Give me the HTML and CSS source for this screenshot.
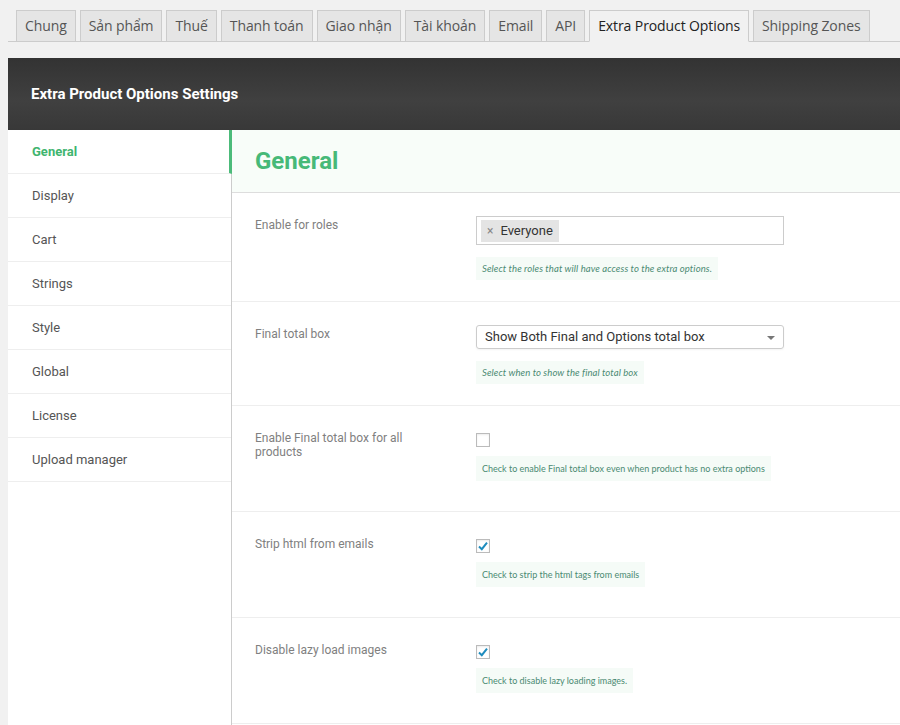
FILE: index.html
```html
<!DOCTYPE html>
<html lang="vi">
<head>
  <meta charset="UTF-8" />
  <title>Extra Product Options Settings</title>
  <link rel="stylesheet" href="styles.css">
</head>
<body>

<div class="wrap">
  <nav class="tabs">
    <a class="tab">Chung</a>
    <a class="tab">Sản phẩm</a>
    <a class="tab">Thuế</a>
    <a class="tab">Thanh toán</a>
    <a class="tab">Giao nhận</a>
    <a class="tab">Tài khoản</a>
    <a class="tab">Email</a>
    <a class="tab">API</a>
    <a class="tab active">Extra Product Options</a>
    <a class="tab">Shipping Zones</a>
  </nav>

  <div class="settings-head">
    <h1>Extra Product Options Settings</h1>
  </div>

  <div class="settings">
    <ul class="side">
      <li class="active">General</li>
      <li>Display</li>
      <li>Cart</li>
      <li>Strings</li>
      <li>Style</li>
      <li>Global</li>
      <li>License</li>
      <li>Upload manager</li>
    </ul>

    <div class="content">
      <div class="content-head"><h2>General</h2></div>

      <div class="row">
        <div class="label">Enable for roles</div>
        <div class="field">
          <div class="multi">
            <span class="choice"><span class="x">×</span>Everyone</span>
          </div>
          <div class="help italic">Select the roles that will have access to the extra options.</div>
        </div>
      </div>

      <div class="row">
        <div class="label">Final total box</div>
        <div class="field">
          <div class="select">Show Both Final and Options total box<span class="arrow"></span></div>
          <div class="help italic">Select when to show the final total box</div>
        </div>
      </div>

      <div class="row check">
        <div class="label">Enable Final total box for all products</div>
        <div class="field">
          <span class="box"></span>
          <div class="help">Check to enable Final total box even when product has no extra options</div>
        </div>
      </div>

      <div class="row check">
        <div class="label">Strip html from emails</div>
        <div class="field">
          <span class="box checked"><svg viewBox="0 0 14 14" width="14" height="14"><path d="M3 7.5 L5.8 10.2 L11 3.6" fill="none" stroke="#1e8cbe" stroke-width="2"/></svg></span>
          <div class="help">Check to strip the html tags from emails</div>
        </div>
      </div>

      <div class="row check">
        <div class="label">Disable lazy load images</div>
        <div class="field">
          <span class="box checked"><svg viewBox="0 0 14 14" width="14" height="14"><path d="M3 7.5 L5.8 10.2 L11 3.6" fill="none" stroke="#1e8cbe" stroke-width="2"/></svg></span>
          <div class="help">Check to disable lazy loading images.</div>
        </div>
      </div>
    </div>
  </div>
</div>

</body>
</html>
```

FILE: styles.css
```css
body {
  margin: 0;
  background: #f1f1f1;
  font-family: Roboto, "Open Sans", sans-serif;
  color: #555;
}
.wrap { margin-left: 8px; }

.tabs { display: flex; gap: 4px; padding: 10px 0 0 8px; border-bottom: 1px solid #ccc; }
.tab {
  font-family: "Open Sans", sans-serif;
  font-size: 14px;
  line-height: 22px;
  padding: 4px 8px;
  margin-bottom: -1px;
  background: #e5e5e5;
  border: 1px solid #ccc;
  color: #555;
  letter-spacing: -0.1px;
}
.tab.active { background: #f1f1f1; border-bottom-color: #f1f1f1; color: #222; }

.settings-head {
  margin-top: 16px;
  height: 72px;
  display: flex;
  align-items: center;
  padding-left: 23px;
  background: linear-gradient(to bottom, #333, #404040 60%, #383838);
}
.settings-head h1 { margin: 0; color: #fff; font-size: 15px; font-weight: 700; }

.settings { display: flex; background: #fff; min-height: 600px; }
.side { list-style: none; margin: 0; padding: 0; width: 223px; border-right: 1px solid #ccc; }
.side li {
  height: 43px;
  line-height: 43px;
  padding-left: 24px;
  border-bottom: 1px solid #eee;
  font-size: 13px;
  color: #555;
}
.side li.active { color: #3fb56f; font-weight: 700; border-right: 3px solid #4cbb7a; margin-right: -1px; }

.content { flex: 1; }
.content-head {
  height: 62px;
  border-bottom: 1px solid #ddd;
  background: #f8fdf9;
  padding-left: 23px;
  display: flex;
  align-items: center;
}
.content-head h2 { margin: 0; font-size: 24px; font-weight: 700; color: #47b978; }

.row {
  display: flex;
  padding: 23px 0 21px 23px;
  border-bottom: 1px solid #eee;
}
.row.check { padding-bottom: 30px; }
.label { width: 180px; margin-right: 41px; font-size: 12px; line-height: 14px; color: #808080; padding-top: 2px; }
.field { display: flex; flex-direction: column; align-items: flex-start; }

.multi {
  width: 298px;
  border: 1px solid #ccc;
  padding: 3px 4px 2px;
  height: 22px;
}
.choice {
  display: inline-block;
  height: 22px;
  line-height: 22px;
  padding: 0 6px;
  background: #e4e4e4;
  font-size: 13px;
  color: #333;
}
.choice .x { color: #888; font-size: 12px; margin-right: 7px; }

.select {
  position: relative;
  width: 298px;
  height: 22px;
  line-height: 22px;
  border: 1px solid #ccc;
  border-radius: 3px;
  padding-left: 8px;
  font-size: 13px;
  color: #333;
  box-shadow: 0 1px 2px rgba(0,0,0,0.05);
}
.arrow {
  position: absolute;
  right: 8px;
  top: 10px;
  border: 4px solid transparent;
  border-top: 4px solid #777;
  border-bottom: 0;
}

.help {
  margin-top: 12px;
  padding: 0 6px;
  line-height: 23px;
  background: #f5fbf7;
  color: #4a8a72;
  font-family: Lato, sans-serif;
  font-size: 9px;
}
.help.italic { font-style: italic; font-size: 9.5px; letter-spacing: 0.1px; }

.box {
  margin-top: 4px;
  width: 14px;
  height: 14px;
  border: 1px solid #bbb;
  box-sizing: border-box;
  background: #fff;
  box-shadow: inset 0 1px 2px rgba(0,0,0,0.08);
  display: flex;
}
.box svg { margin: -1px; }
.check .help { margin-top: 9px; line-height: 25px; }
```
